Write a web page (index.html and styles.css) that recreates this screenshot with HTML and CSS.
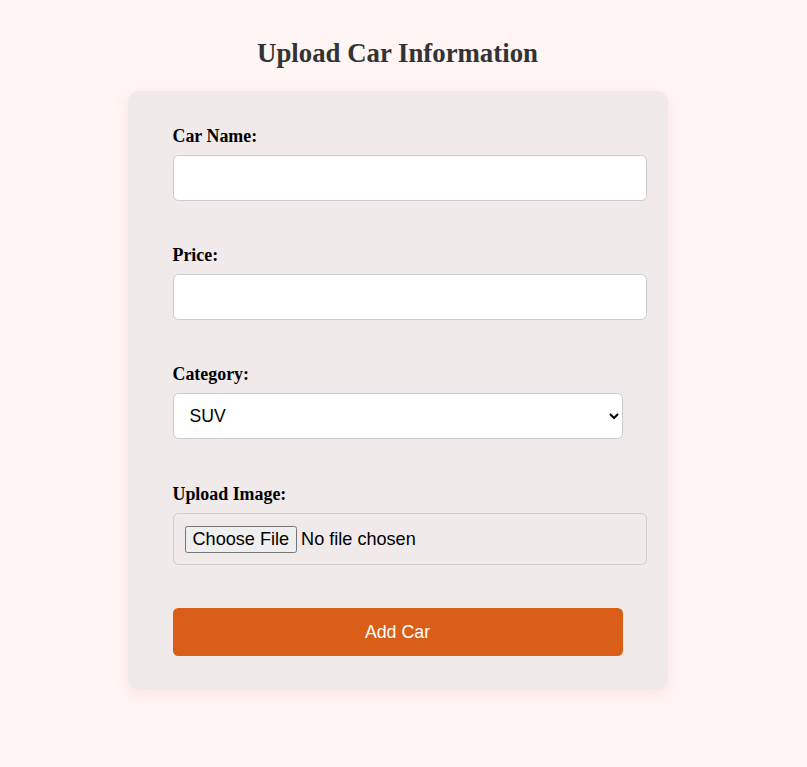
FILE: index.html
```html
<!DOCTYPE html>
<html lang="en">
<head>
<meta charset="utf-8">
<title>Upload Car Information</title>
<link rel="stylesheet" href="styles.css">
</head>
<body>
<main class="page">
  <h2 class="title">Upload Car Information</h2>
  <form class="card">
    <div class="group">
      <label class="label" for="name">Car Name:</label>
      <input class="field" type="text" id="name">
    </div>
    <div class="group">
      <label class="label" for="price">Price:</label>
      <input class="field" type="text" id="price">
    </div>
    <div class="group">
      <label class="label" for="category">Category:</label>
      <select class="select" id="category">
        <option>SUV</option>
        <option>Sedan</option>
        <option>Hatchback</option>
      </select>
    </div>
    <div class="group group-file">
      <label class="label" for="image">Upload Image:</label>
      <input class="file" type="file" id="image">
    </div>
    <button class="submit" type="button">Add Car</button>
  </form>
</main>
</body>
</html>
```
FILE: styles.css
```css
html, body {
  margin: 0;
  padding: 0;
  background: #fff5f5;
}
body {
  font-family: "Liberation Serif", "Times New Roman", serif;
}
.page {
  padding: 38px 12px 60px 0;
}
.title {
  margin: 0 0 23px;
  text-align: center;
  font-size: 26.8px;
  line-height: 30px;
  font-weight: bold;
  color: #333;
}
.card {
  box-sizing: border-box;
  width: 540px;
  margin: 0 auto;
  padding: 35px 21px 34px 45px;
  background: #f0eaea;
  border-radius: 11px;
  box-shadow: 0 4px 16px rgba(235, 140, 140, 0.16);
  display: flex;
  flex-direction: column;
  gap: 44px;
}
.group {
  display: flex;
  flex-direction: column;
  align-items: flex-start;
}
.group-file {
  margin-top: 1px;
  margin-bottom: -1px;
}
.label {
  font-size: 17.9px;
  line-height: 20px;
  font-weight: bold;
  color: #000;
  margin-bottom: 9px;
}
.field {
  box-sizing: border-box;
  width: 100%;
  height: 46px;
  padding: 0 12px;
  border: 1px solid #ccc;
  border-radius: 5.5px;
  background: #fff;
  font-family: "Liberation Sans", Arial, sans-serif;
  font-size: 17.6px;
}
.select {
  box-sizing: border-box;
  width: 450px;
  height: 46px;
  padding: 0 8px 0 12px;
  border: 1px solid #ccc;
  border-radius: 5.5px;
  background: #fff;
  color: #000;
  font-family: "Liberation Sans", Arial, sans-serif;
  font-size: 17.6px;
}
.file {
  box-sizing: border-box;
  width: 100%;
  height: 52px;
  padding: 12px 11px;
  border: 1px solid #ccc;
  border-radius: 5.5px;
  font-family: "Liberation Sans", Arial, sans-serif;
  font-size: 18.1px;
  color: #000;
}
.submit {
  width: 450px;
  height: 48px;
  border: none;
  border-radius: 5.5px;
  background: #da5e17;
  color: #fff;
  font-family: "Liberation Sans", Arial, sans-serif;
  font-size: 17.8px;
  cursor: pointer;
}
```
